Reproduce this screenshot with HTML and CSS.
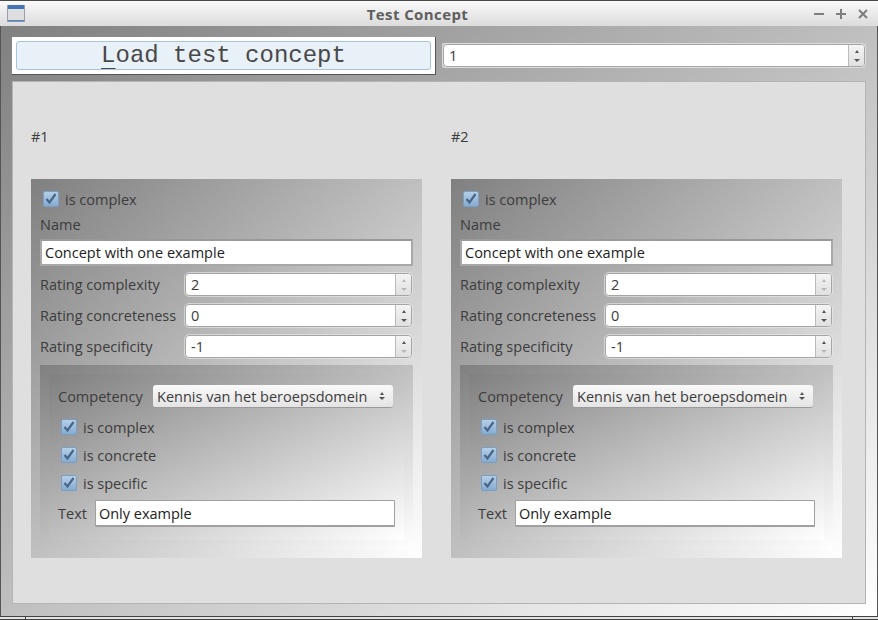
FILE: index.html
```html
<!DOCTYPE html>
<html lang="en">
<head>
  <meta charset="UTF-8">
  <title>Test Concept</title>
  <meta name="viewport" content="width=device-width, initial-scale=1.0">
  <link rel="stylesheet" href="styles.css">
</head>
<body>
  <div class="window">
    <div class="titlebar">
      <svg class="win-icon" width="18" height="17" viewBox="0 0 18 17">
        <rect x="0.5" y="0.5" width="17" height="16" fill="#dedede" stroke="#9aa0a8"/>
        <rect x="1" y="0" width="16" height="4" fill="#3f74b8"/>
        <rect x="1" y="15" width="16" height="1.5" fill="#5d86bd"/>
      </svg>
      <span class="title">Test Concept</span>
      <div class="win-buttons">
        <svg width="10" height="10" viewBox="0 0 10 10"><path d="M0 5h10" stroke="#7d7d7d" stroke-width="2"/></svg>
        <svg width="10" height="10" viewBox="0 0 10 10"><path d="M0 5h10M5 0v10" stroke="#7d7d7d" stroke-width="2"/></svg>
        <svg width="10" height="10" viewBox="0 0 10 10"><path d="M1 1l8 8M9 1l-8 8" stroke="#7d7d7d" stroke-width="2"/></svg>
      </div>
    </div>

    <div class="content">
      <div class="toolbar">
        <div class="load-frame">
          <button class="load-btn"><u>L</u>oad test concept</button>
        </div>
        <div class="top-spin-frame">
          <div class="spin top-spin">
            <span class="spin-value">1</span>
            <span class="spin-arrows"><i class="up"></i><i class="down"></i></span>
          </div>
        </div>
      </div>

      <div class="panel">
        <div class="column">
          <div class="number">#1</div>
          <div class="card">
            <label class="check top-check"><span class="box"><svg width="14" height="14" viewBox="0 0 14 14"><path d="M2.5 7l3 3.5 6-8.5" fill="none" stroke="#46668a" stroke-width="2.2"/></svg></span>is complex</label>
            <div class="name-label">Name</div>
            <div class="name-input">Concept with one example</div>
            <div class="rating">
              <span class="rating-label">Rating complexity</span>
              <div class="spin"><span class="spin-value">2</span><span class="spin-arrows"><i class="up off"></i><i class="down off"></i></span></div>
            </div>
            <div class="rating">
              <span class="rating-label">Rating concreteness</span>
              <div class="spin"><span class="spin-value">0</span><span class="spin-arrows"><i class="up"></i><i class="down"></i></span></div>
            </div>
            <div class="rating">
              <span class="rating-label">Rating specificity</span>
              <div class="spin"><span class="spin-value">-1</span><span class="spin-arrows"><i class="up"></i><i class="down off"></i></span></div>
            </div>
            <div class="example">
              <div class="example-inner">
                <div class="competency">
                  <span>Competency</span>
                  <div class="combo">Kennis van het beroepsdomein<span class="spin-arrows combo-arrows"><i class="up"></i><i class="down"></i></span></div>
                </div>
                <label class="check"><span class="box"><svg width="14" height="14" viewBox="0 0 14 14"><path d="M2.5 7l3 3.5 6-8.5" fill="none" stroke="#46668a" stroke-width="2.2"/></svg></span>is complex</label>
                <label class="check"><span class="box"><svg width="14" height="14" viewBox="0 0 14 14"><path d="M2.5 7l3 3.5 6-8.5" fill="none" stroke="#46668a" stroke-width="2.2"/></svg></span>is concrete</label>
                <label class="check"><span class="box"><svg width="14" height="14" viewBox="0 0 14 14"><path d="M2.5 7l3 3.5 6-8.5" fill="none" stroke="#46668a" stroke-width="2.2"/></svg></span>is specific</label>
                <div class="text-row">
                  <span>Text</span>
                  <div class="text-input">Only example</div>
                </div>
              </div>
            </div>
          </div>
        </div>

        <div class="column">
          <div class="number">#2</div>
          <div class="card">
            <label class="check top-check"><span class="box"><svg width="14" height="14" viewBox="0 0 14 14"><path d="M2.5 7l3 3.5 6-8.5" fill="none" stroke="#46668a" stroke-width="2.2"/></svg></span>is complex</label>
            <div class="name-label">Name</div>
            <div class="name-input">Concept with one example</div>
            <div class="rating">
              <span class="rating-label">Rating complexity</span>
              <div class="spin"><span class="spin-value">2</span><span class="spin-arrows"><i class="up off"></i><i class="down off"></i></span></div>
            </div>
            <div class="rating">
              <span class="rating-label">Rating concreteness</span>
              <div class="spin"><span class="spin-value">0</span><span class="spin-arrows"><i class="up"></i><i class="down"></i></span></div>
            </div>
            <div class="rating">
              <span class="rating-label">Rating specificity</span>
              <div class="spin"><span class="spin-value">-1</span><span class="spin-arrows"><i class="up"></i><i class="down off"></i></span></div>
            </div>
            <div class="example">
              <div class="example-inner">
                <div class="competency">
                  <span>Competency</span>
                  <div class="combo">Kennis van het beroepsdomein<span class="spin-arrows combo-arrows"><i class="up"></i><i class="down"></i></span></div>
                </div>
                <label class="check"><span class="box"><svg width="14" height="14" viewBox="0 0 14 14"><path d="M2.5 7l3 3.5 6-8.5" fill="none" stroke="#46668a" stroke-width="2.2"/></svg></span>is complex</label>
                <label class="check"><span class="box"><svg width="14" height="14" viewBox="0 0 14 14"><path d="M2.5 7l3 3.5 6-8.5" fill="none" stroke="#46668a" stroke-width="2.2"/></svg></span>is concrete</label>
                <label class="check"><span class="box"><svg width="14" height="14" viewBox="0 0 14 14"><path d="M2.5 7l3 3.5 6-8.5" fill="none" stroke="#46668a" stroke-width="2.2"/></svg></span>is specific</label>
                <div class="text-row">
                  <span>Text</span>
                  <div class="text-input">Only example</div>
                </div>
              </div>
            </div>
          </div>
        </div>
      </div>
    </div>

    <div class="bottom-edge"><span class="grip-left"></span><span class="grip-mid"></span><span class="grip-right"></span></div>
  </div>
</body>
</html>
```

FILE: styles.css
```css
html, body {
  margin: 0;
  padding: 0;
}
body {
  width: 878px;
  height: 620px;
  overflow: hidden;
  font-family: "Open Sans", "Noto Sans", sans-serif;
  font-size: 14.5px;
  color: #3c3c3c;
}
.window {
  display: flex;
  flex-direction: column;
  width: 878px;
  height: 620px;
  background: #555;
}
.titlebar {
  display: flex;
  align-items: center;
  box-sizing: border-box;
  height: 26px;
  padding: 0 10px 0 7px;
  border-top: 1px solid #4a4a4a;
  background: linear-gradient(#f9f9f9, #dcdcdc);
}
.title {
  flex: 1;
  padding-right: 4px;
  text-align: center;
  font-size: 15px;
  font-weight: bold;
  letter-spacing: 0.4px;
  color: #5e5e5e;
}
.win-buttons {
  display: flex;
  gap: 12px;
}
.content {
  flex: 1;
  box-sizing: border-box;
  margin: 0 1px;
  padding: 11px 11px 12px;
  background: linear-gradient(to bottom right, #808080, #ffffff);
}
.toolbar {
  display: flex;
  align-items: flex-start;
  gap: 6px;
  height: 37px;
  margin-bottom: 7px;
}
.load-frame {
  box-sizing: border-box;
  flex: none;
  width: 424px;
  height: 38px;
  padding: 4px;
  background: #fff;
  border-right: 1px solid #555;
  border-bottom: 1px solid #555;
}
.load-btn {
  display: block;
  width: 100%;
  height: 29px;
  padding: 0;
  font-family: "Liberation Mono", monospace;
  font-size: 24px;
  line-height: 27px;
  color: #484848;
  background: #e8f0f8;
  border: 1px solid #a9c3da;
  border-radius: 3px;
}
.load-btn u {
  text-decoration-thickness: 1px;
  text-underline-offset: 6px;
}
.top-spin-frame {
  flex: 1;
  margin-top: 6px;
  padding: 1px;
  background: #c9c9c9;
}
.spin {
  flex: 1;
  display: flex;
  box-sizing: border-box;
  height: 23px;
  background: #fff;
  border: 1px solid #a5a5a5;
  border-radius: 4px;
  outline: 1px solid rgba(235, 235, 235, 0.6);
}
.spin-value {
  flex: 1;
  padding-left: 5px;
  line-height: 21px;
}
.spin-arrows {
  display: flex;
  flex-direction: column;
  align-items: center;
  justify-content: center;
  gap: 6px;
  width: 15px;
  background: linear-gradient(#f4f4f4, #e0e0e0);
  border-left: 1px solid #bbb;
  border-radius: 0 3px 3px 0;
}
.spin-arrows i {
  display: block;
  width: 0;
  height: 0;
}
.spin-arrows .up {
  border-left: 2.5px solid transparent;
  border-right: 2.5px solid transparent;
  border-bottom: 3px solid #555;
}
.spin-arrows .down {
  border-left: 3.5px solid transparent;
  border-right: 3.5px solid transparent;
  border-top: 3px solid #555;
}
.spin-arrows .up.off {
  border-bottom-color: #b8b8b8;
}
.spin-arrows .down.off {
  border-top-color: #b8b8b8;
}
.panel {
  display: flex;
  gap: 29px;
  box-sizing: border-box;
  height: 523px;
  padding: 0 18px;
  background: #dfdfdf;
  border: 1px solid #b4b4b4;
}
.column {
  width: 391px;
}
.number {
  height: 97px;
  line-height: 110px;
}
.card {
  box-sizing: border-box;
  height: 379px;
  padding: 8px 9px 8px;
  background: linear-gradient(to bottom right, #808080, #ffffff);
}
.check {
  display: flex;
  align-items: center;
  gap: 6px;
  height: 24px;
}
.box {
  display: flex;
  align-items: center;
  justify-content: center;
  box-sizing: border-box;
  width: 16px;
  height: 16px;
  margin-left: 3px;
  background: linear-gradient(#b5cfe6, #86abd0);
  border: 1px solid #7a9fc2;
  border-radius: 2px;
}
.name-label {
  height: 28px;
  line-height: 27px;
}
.name-input {
  box-sizing: border-box;
  height: 27px;
  padding-left: 3px;
  line-height: 23px;
  color: #222;
  background: #fff;
  border: 2px solid #a8a8a8;
  border-top-color: #999;
  margin-bottom: 6px;
}
.rating {
  display: flex;
  align-items: center;
  height: 25px;
  margin-bottom: 6px;
}
.rating-label {
  width: 145px;
  white-space: nowrap;
}
.rating .spin {
  margin-right: 1px;
}
.example {
  box-sizing: border-box;
  height: 185px;
  padding: 9px 9px 10px;
  background: linear-gradient(to bottom right, #808080, #ffffff);
}
.example-inner {
  box-sizing: border-box;
  height: 166px;
  padding: 11px 9px 0;
  background: linear-gradient(to bottom right, #808080, #ffffff);
}
.competency {
  display: flex;
  align-items: center;
  justify-content: space-between;
  height: 23px;
  margin-bottom: 5px;
}
.combo {
  display: flex;
  align-items: center;
  justify-content: space-between;
  box-sizing: border-box;
  width: 240px;
  height: 23px;
  margin-right: 2px;
  padding: 0 4px;
  background: linear-gradient(#fafafa, #e4e4e4);
  border-radius: 3px;
  border-bottom: 1px solid #9a9a9a;
}
.combo-arrows {
  gap: 2px;
  background: none;
  border: 0;
}
.example-inner .check {
  height: 28px;
}
.text-row {
  display: flex;
  align-items: center;
  gap: 8px;
  margin-top: 3px;
}
.text-input {
  box-sizing: border-box;
  flex: 1;
  height: 27px;
  padding-left: 3px;
  line-height: 25px;
  color: #222;
  background: #fff;
  border: 2px solid #a0a0a0;
  border-width: 1px 1px 2px;
  border-radius: 1px;
}
.bottom-edge {
  display: flex;
  height: 4px;
  gap: 1px;
  background: #444;
}
.bottom-edge span {
  height: 2px;
  margin-top: 1px;
  background: #e2e2e2;
}
.grip-left {
  width: 25px;
}
.grip-mid {
  flex: 1;
}
.grip-right {
  width: 25px;
}
```
